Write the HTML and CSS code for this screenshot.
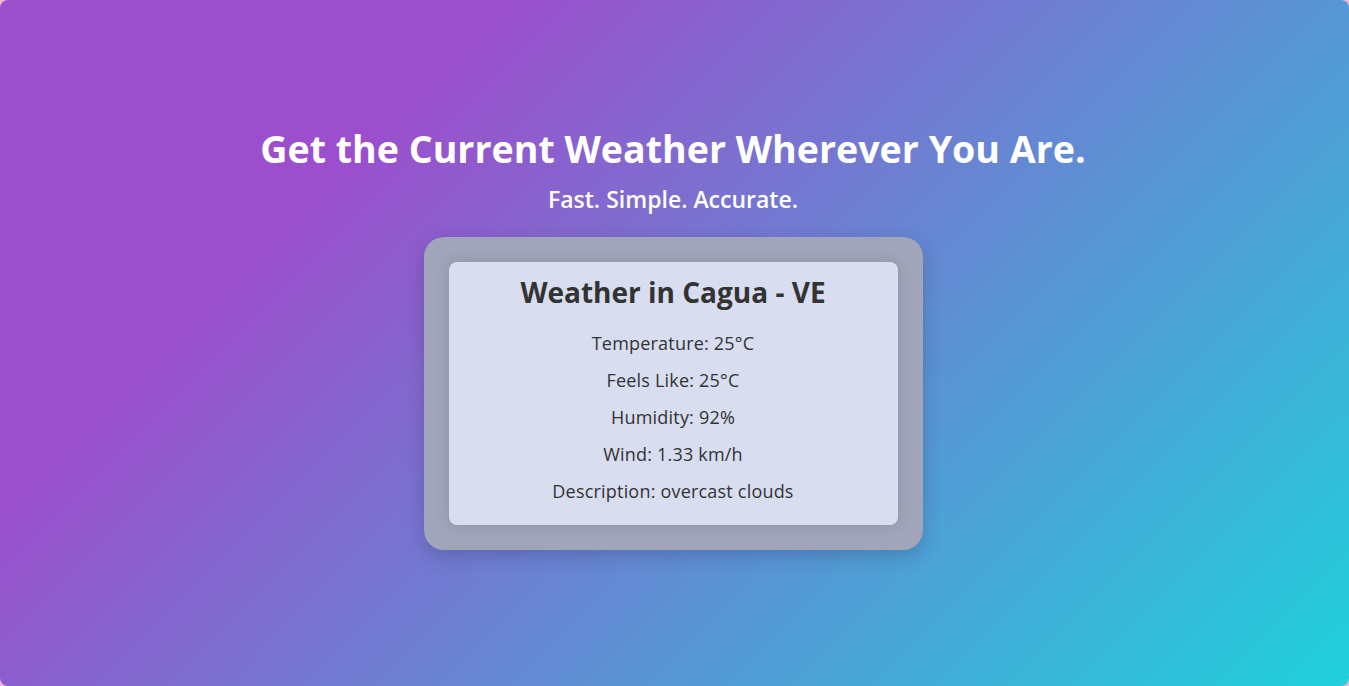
FILE: index.html
```html
<!DOCTYPE html>
<html lang="en">
<head>
<meta charset="utf-8">
<title>Weather</title>
<link rel="stylesheet" href="styles.css">
</head>
<body>
<main class="page">
  <h1 class="title">Get the Current Weather Wherever You Are.</h1>
  <p class="subtitle">Fast. Simple. Accurate.</p>
  <section class="frame">
    <div class="card">
      <h2 class="card-title">Weather in Cagua - VE</h2>
      <p class="row">Temperature: 25°C</p>
      <p class="row">Feels Like: 25°C</p>
      <p class="row">Humidity: 92%</p>
      <p class="row">Wind: 1.33 km/h</p>
      <p class="row">Description: overcast clouds</p>
    </div>
  </section>
</main>
</body>
</html>
```

FILE: styles.css
```css
html {
  background: #f3b6cf;
  height: 100%;
}
body {
  margin: 0;
  height: 100%;
  border-radius: 8px;
  overflow: hidden;
  background: linear-gradient(135deg, #9b4fcc 25%, #1fd1dc 100%);
  font-family: "Open Sans", Lato, sans-serif;
}
.page {
  height: 100%;
  box-sizing: border-box;
  padding: 0 3px 14px 0;
  display: flex;
  flex-direction: column;
  align-items: center;
  justify-content: center;
  color: #ffffff;
}
.title {
  margin: 0 0 9px;
  font-size: 37.6px;
  font-weight: 700;
  line-height: 52px;
}
.subtitle {
  margin: 0 0 23px;
  font-size: 23px;
  font-weight: 600;
  line-height: 30px;
}
.frame {
  width: 449px;
  padding: 25px;
  border-radius: 20px;
  background: #a1a5b9;
  box-shadow: 0 6px 18px rgba(40, 40, 80, 0.25);
}
.card {
  background: #d8ddef;
  border-radius: 8px;
  padding: 12px 20px 21px;
  color: #333333;
  text-align: center;
  box-shadow: 0 0 14px rgba(60, 60, 90, 0.18);
  display: flex;
  flex-direction: column;
  gap: 12px;
}
.card-title {
  margin: 0 0 9px;
  font-size: 28px;
  font-weight: 700;
  line-height: 36px;
}
.row {
  margin: 0;
  font-size: 18px;
  letter-spacing: 0.2px;
  line-height: 25px;
}
```
